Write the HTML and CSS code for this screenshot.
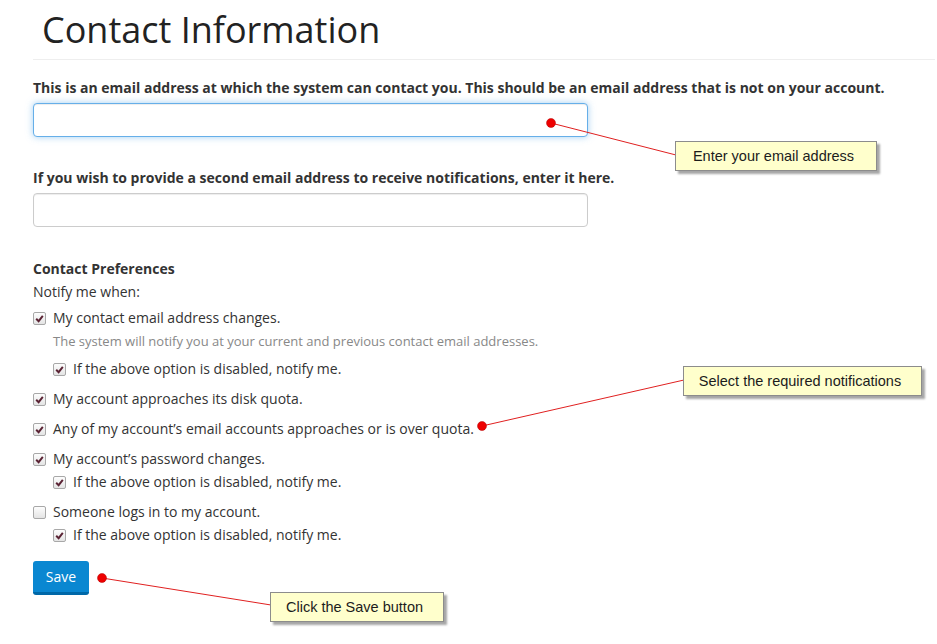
FILE: index.html
```html
<!DOCTYPE html>
<html lang="en">
<head>
    <meta charset="UTF-8">
    <meta name="viewport" content="width=device-width, initial-scale=1.0">
    <title>Contact Information</title>
    <link rel="stylesheet" href="styles.css">
</head>
<body>
    <div class="page">
        <!-- page heading -->
        <div class="page-header">
            <h1>Contact Information</h1>
        </div>

        <!-- email addresses -->
        <div class="field">
            <label for="email1">This is an email address at which the system can contact you. This should be an email address that is not on your account.</label>
            <input type="text" id="email1" class="text-input focused">
        </div>
        <div class="field second">
            <label for="email2">If you wish to provide a second email address to receive notifications, enter it here.</label>
            <input type="text" id="email2" class="text-input">
        </div>

        <!-- notification preferences -->
        <div class="prefs">
            <h4>Contact Preferences</h4>
            <p class="intro">Notify me when:</p>

            <div class="group">
                <div class="option"><span class="box on"><svg viewBox="0 0 10 10"><path d="M2 5.2 L4.2 7.4 L8 2.6"/></svg></span>My contact email address changes.</div>
                <p class="help">The system will notify you at your current and previous contact email addresses.</p>
                <div class="option sub after-help"><span class="box on"><svg viewBox="0 0 10 10"><path d="M2 5.2 L4.2 7.4 L8 2.6"/></svg></span>If the above option is disabled, notify me.</div>
            </div>

            <div class="group">
                <div class="option"><span class="box on"><svg viewBox="0 0 10 10"><path d="M2 5.2 L4.2 7.4 L8 2.6"/></svg></span>My account approaches its disk quota.</div>
            </div>

            <div class="group">
                <div class="option"><span class="box on"><svg viewBox="0 0 10 10"><path d="M2 5.2 L4.2 7.4 L8 2.6"/></svg></span>Any of my account’s email accounts approaches or is over quota.</div>
            </div>

            <div class="group">
                <div class="option"><span class="box on"><svg viewBox="0 0 10 10"><path d="M2 5.2 L4.2 7.4 L8 2.6"/></svg></span>My account’s password changes.</div>
                <div class="option sub"><span class="box on"><svg viewBox="0 0 10 10"><path d="M2 5.2 L4.2 7.4 L8 2.6"/></svg></span>If the above option is disabled, notify me.</div>
            </div>

            <div class="group">
                <div class="option"><span class="box"></span>Someone logs in to my account.</div>
                <div class="option sub"><span class="box on"><svg viewBox="0 0 10 10"><path d="M2 5.2 L4.2 7.4 L8 2.6"/></svg></span>If the above option is disabled, notify me.</div>
            </div>
        </div>

        <button class="btn-save">Save</button>
    </div>

    <!-- callout pointers -->
    <svg class="pointers" width="937" height="644" viewBox="0 0 937 644">
        <line x1="551" y1="123" x2="676" y2="155"/>
        <line x1="482" y1="426" x2="684" y2="380"/>
        <line x1="102" y1="578" x2="271" y2="605"/>
        <circle cx="551" cy="123" r="4.5"/>
        <circle cx="482" cy="426" r="4.5"/>
        <circle cx="102" cy="578" r="4.5"/>
    </svg>
    <div class="callout c-email">Enter your email address</div>
    <div class="callout c-notify">Select the required notifications</div>
    <div class="callout c-save">Click the Save button</div>
</body>
</html>
```

FILE: styles.css
```css
/* base */
body {
    margin: 0;
    font-family: "Open Sans", "Liberation Sans", sans-serif;
    font-size: 14px;
    line-height: 20px;
    color: #333;
    background: #fff;
}
.page {
    padding: 0 2px 0 33px;
}

/* heading with rule under it */
.page-header {
    padding: 10px 0 9px 9px;
    border-bottom: 1px solid #eee;
}
.page-header h1 {
    margin: 0;
    font-size: 36px;
    line-height: 40px;
    font-weight: 400;
    color: #222;
}

/* text fields */
.field {
    margin-top: 18px;
}
.field.second {
    margin-top: 31px;
}
.field label {
    display: block;
    font-weight: 700;
    margin-bottom: 5px;
}
.text-input {
    display: block;
    box-sizing: border-box;
    width: 555px;
    height: 34px;
    border: 1px solid #ccc;
    border-radius: 4px;
    box-shadow: inset 0 1px 1px rgba(0, 0, 0, .075);
}
.text-input.focused {
    border-color: #66afe9;
    box-shadow: inset 0 1px 1px rgba(0, 0, 0, .075), 0 0 7px rgba(102, 175, 233, .6);
}

/* checkboxes */
.prefs {
    margin-top: 32px;
}
.prefs h4 {
    margin: 0;
    font-size: 14px;
    font-weight: 700;
}
.intro {
    margin: 3px 0 6px;
}
.group {
    margin-bottom: 10px;
}
.option {
    display: flex;
    align-items: center;
}
.option.sub {
    margin-top: 3px;
    padding-left: 20px;
}
.option.after-help {
    margin-top: 9px;
}
.box {
    box-sizing: border-box;
    width: 13px;
    height: 13px;
    margin: 0 7px 0 0;
    border: 1px solid #a8a8a8;
    border-radius: 2px;
    background: linear-gradient(#fdfdfd, #e4e4e4);
    display: flex;
}
.box svg {
    width: 11px;
    height: 11px;
}
.box path {
    fill: none;
    stroke: #5a2334;
    stroke-width: 1.8;
}
.help {
    margin: 4px 0 0 20px;
    font-size: 13px;
    line-height: 18px;
    color: #888;
}

/* save button */
.btn-save {
    margin-top: 6px;
    width: 56px;
    height: 34px;
    padding: 0;
    border: none;
    border-bottom: 3px solid #0068a8;
    border-radius: 3px;
    background: #0a87d1;
    color: #fff;
    font-family: "Open Sans", "Liberation Sans", sans-serif;
    font-size: 14px;
}

/* callouts drawn over the form */
.pointers {
    position: absolute;
    left: 0;
    top: 0;
    pointer-events: none;
}
.pointers line {
    stroke: #e02020;
    stroke-width: 1;
}
.pointers circle {
    fill: #ee0000;
    stroke: #b00000;
    stroke-width: .5;
}
.callout {
    position: absolute;
    box-sizing: border-box;
    height: 30px;
    line-height: 28px;
    padding-right: 5px;
    text-align: center;
    background: #ffffcc;
    border: 1px solid #8c8c8c;
    box-shadow: 3px 3px 2px rgba(0, 0, 0, .35);
    font-family: "Liberation Sans", Arial, sans-serif;
    font-size: 14.5px;
    color: #1c1c1c;
}
.c-email {
    left: 675px;
    top: 141px;
    width: 202px;
}
.c-notify {
    left: 683px;
    top: 366px;
    width: 239px;
}
.c-save {
    left: 270px;
    top: 592px;
    width: 174px;
}
```
